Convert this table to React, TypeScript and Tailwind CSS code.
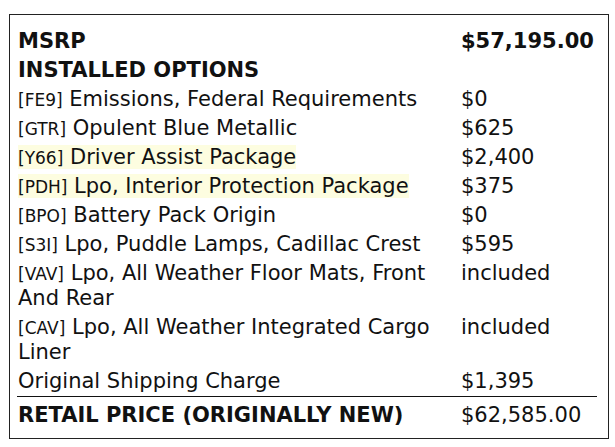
import React from 'react'

type Row = {
  code?: string
  label: string
  price: string
  highlight?: boolean
}

const OPTIONS: Row[] = [
  { code: 'FE9', label: 'Emissions, Federal Requirements', price: '$0' },
  { code: 'GTR', label: 'Opulent Blue Metallic', price: '$625' },
  { code: 'Y66', label: 'Driver Assist Package', price: '$2,400', highlight: true },
  { code: 'PDH', label: 'Lpo, Interior Protection Package', price: '$375', highlight: true },
  { code: 'BPO', label: 'Battery Pack Origin', price: '$0' },
  { code: 'S3I', label: 'Lpo, Puddle Lamps, Cadillac Crest', price: '$595' },
  { code: 'VAV', label: 'Lpo, All Weather Floor Mats, Front And Rear', price: 'included' },
  { code: 'CAV', label: 'Lpo, All Weather Integrated Cargo Liner', price: 'included' },
]

function OptionLabel({ row }: { row: Row }) {
  const inner = (
    <>
      {row.code && <span className="text-[17px] leading-none">[{row.code}]</span>} {row.label}
    </>
  )
  if (row.highlight) return <span className="bg-[#fdfde0]">{inner}</span>
  return inner
}

export default function App() {
  return (
    <div className="bg-white w-[615px] h-[447px] pt-[14px] pl-[9px] font-['DejaVu_Sans',sans-serif] text-[#111]">
      <div className="w-[600px] h-[425px] border border-[#222] pl-[7px] pr-[11px] pt-[12px]">
        <table className="w-full border-collapse text-[21px] leading-[25px]">
          <tbody>
            <tr>
              <td className="w-[444px] py-[2px] pl-px align-top font-bold">MSRP</td>
              <td className="py-[2px] align-top font-bold">$57,195.00</td>
            </tr>
            <tr>
              <td className="py-[2px] pl-px align-top font-bold" colSpan={2}>INSTALLED OPTIONS</td>
            </tr>
            {OPTIONS.map(row => (
              <tr key={row.code}>
                <td className="py-[2px] pl-px pr-[6px] align-top">
                  <OptionLabel row={row} />
                </td>
                <td className="py-[2px] align-top">{row.price}</td>
              </tr>
            ))}
            <tr>
              <td className="py-[2px] pl-px align-top">Original Shipping Charge</td>
              <td className="py-[2px] align-top">$1,395</td>
            </tr>
            <tr className="border-t border-[#111]">
              <td className="pt-[6px] pb-[2px] pl-px align-top font-bold">RETAIL PRICE (ORIGINALLY NEW)</td>
              <td className="pt-[6px] pb-[2px] align-top">$62,585.00</td>
            </tr>
          </tbody>
        </table>
      </div>
    </div>
  )
}
